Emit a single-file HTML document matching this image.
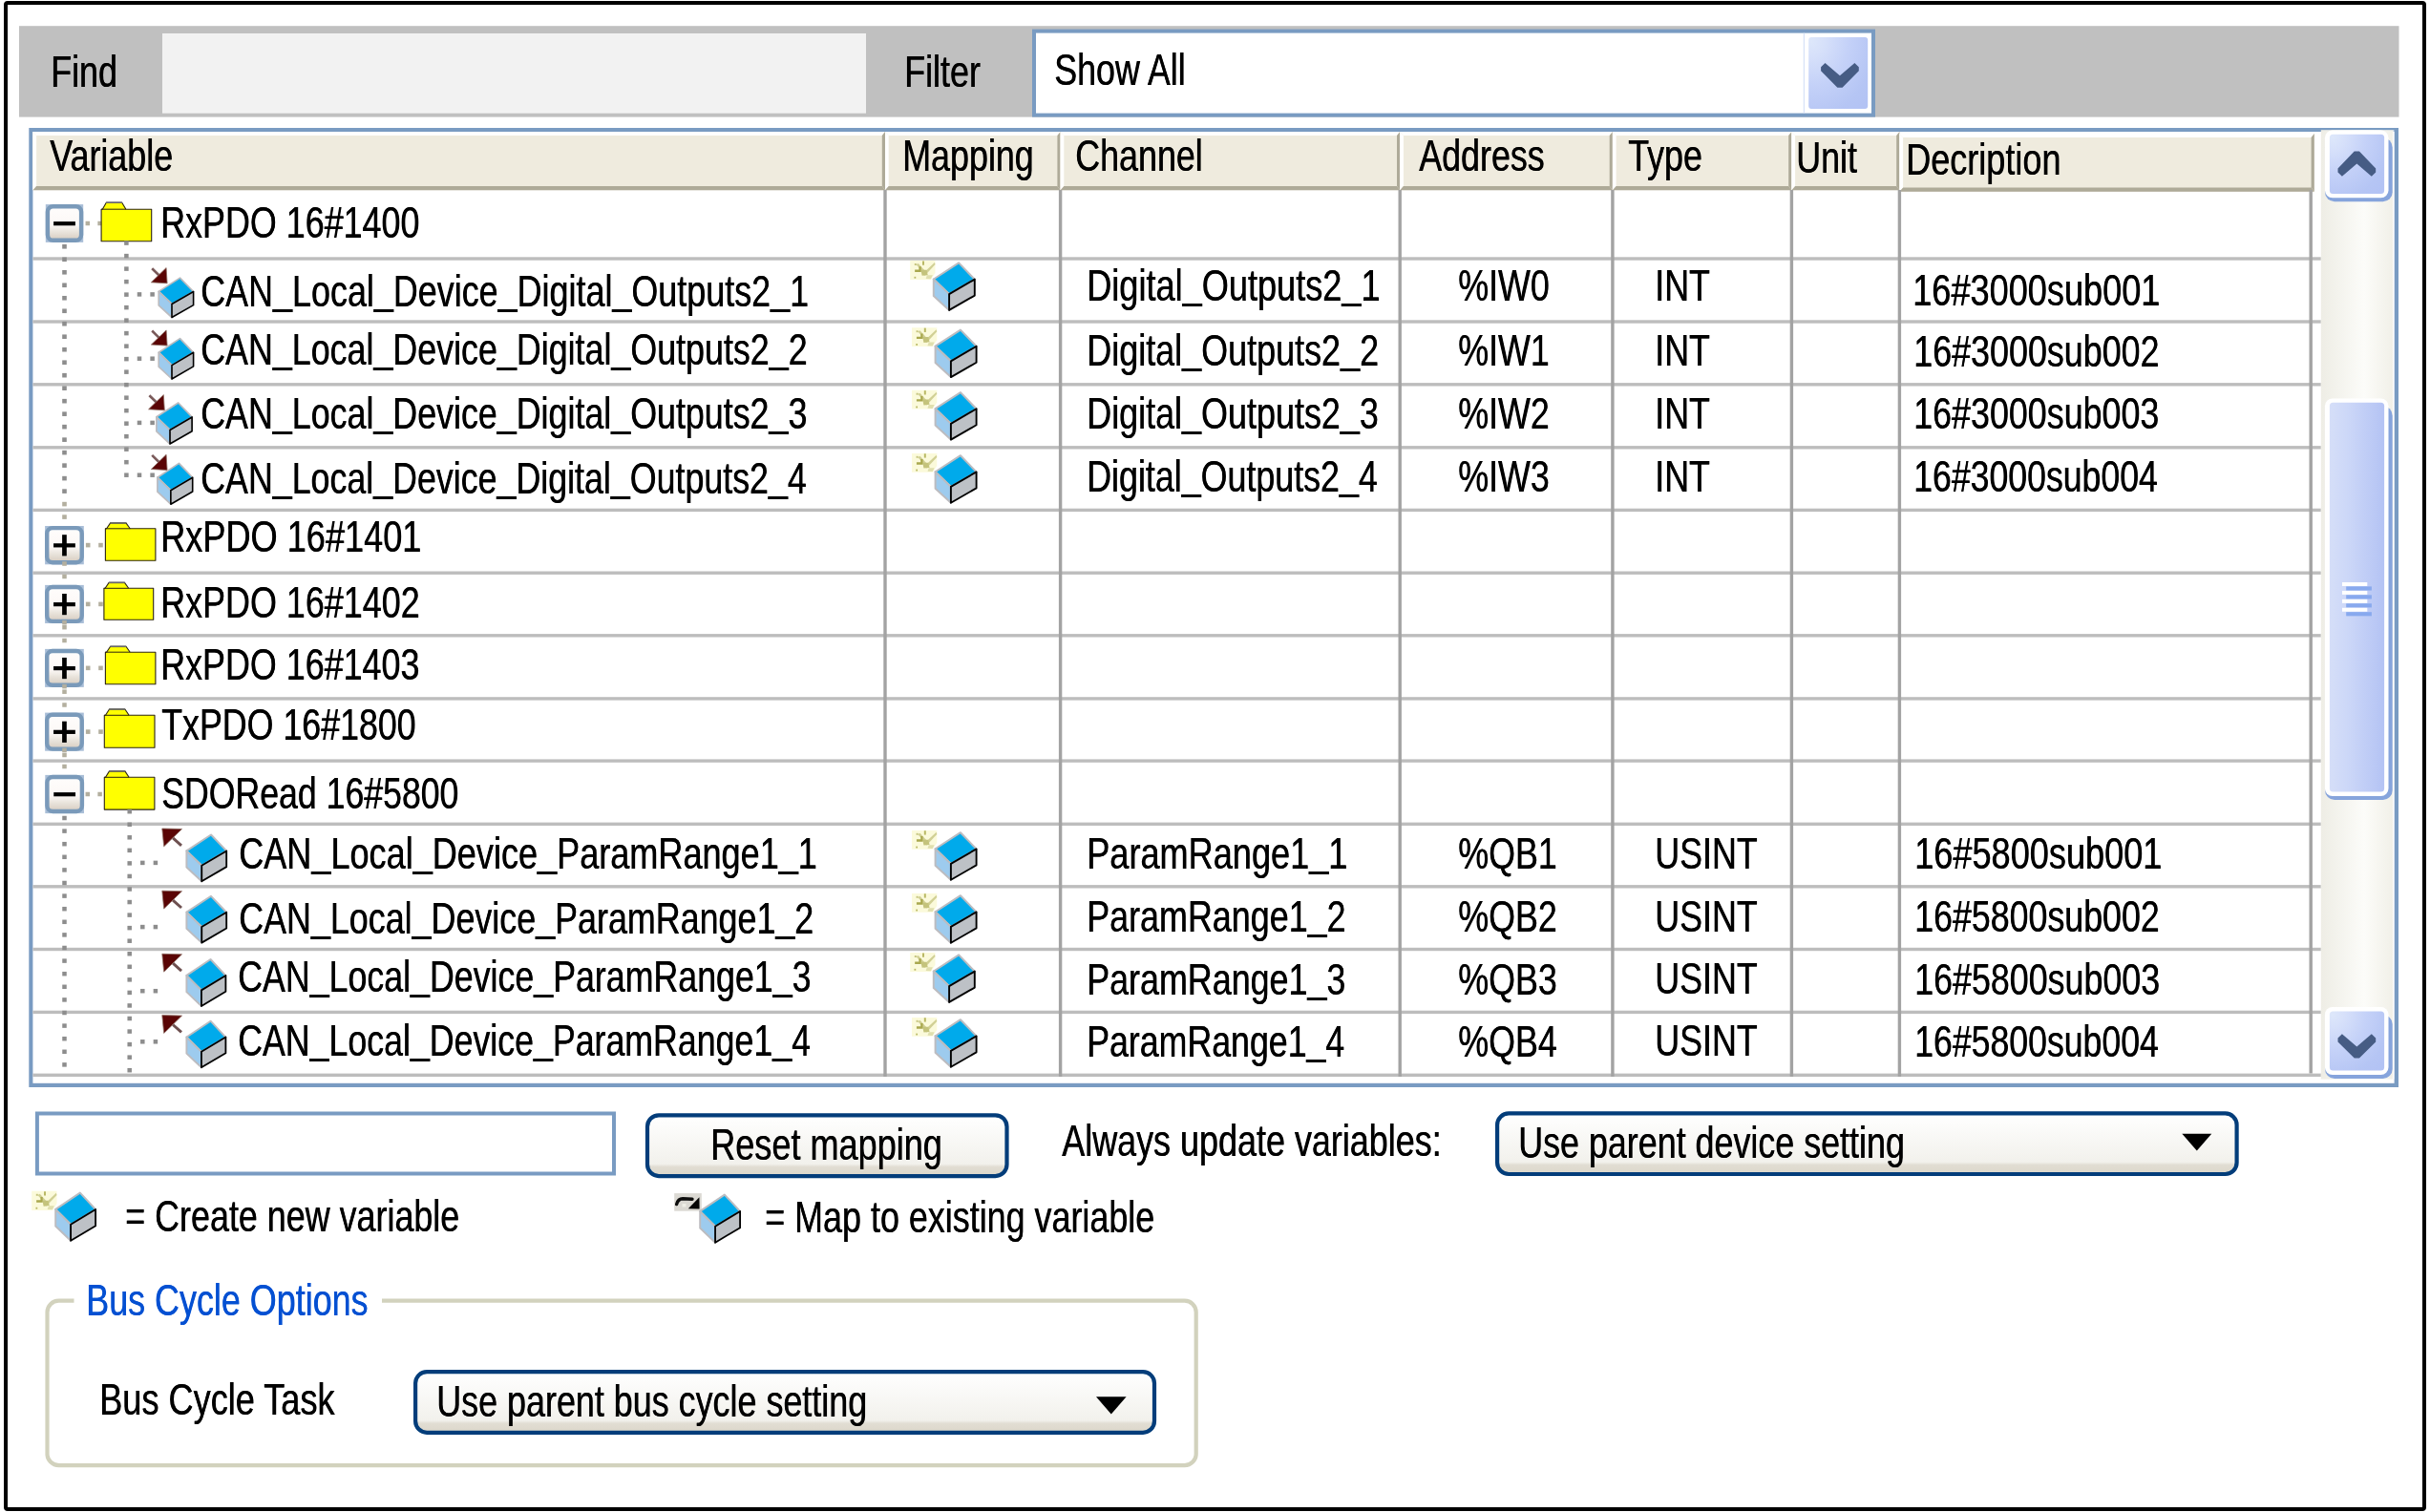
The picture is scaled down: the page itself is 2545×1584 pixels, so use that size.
<!DOCTYPE html>
<html><head><meta charset="utf-8"><title>I/O Mapping</title>
<style>
html,body{margin:0;padding:0;background:#fff;}
body{width:2545px;height:1584px;position:relative;overflow:hidden;font-family:"Liberation Sans",sans-serif;}
svg{position:absolute;left:0;top:0;}
#tx{position:absolute;left:0;top:0;width:2545px;height:1584px;will-change:transform;}
.t{position:absolute;white-space:nowrap;line-height:1;transform-origin:0 0;display:block;text-shadow:0.55px 0 0 currentColor;margin-left:-0.2px;}
.t i{font-style:normal;position:relative;top:-2.7px;}
</style></head><body>
<svg width="2545" height="1584" viewBox="0 0 2545 1584">
<rect x="6" y="3" width="2533" height="1578" fill="#fff" stroke="#000" stroke-width="4" rx="2"/>
<rect x="20.00" y="27.20" width="2492.50" height="95.40" fill="#c0c0c0" />
<rect x="170.00" y="35.00" width="737.00" height="83.70" fill="#f2f2f2" />
<rect x="1081.00" y="30.60" width="883.00" height="92.00" fill="#799bc2" />
<rect x="1085.00" y="34.60" width="875.00" height="84.00" fill="#fff" />
<defs>
<radialGradient id="gb" cx="0.05" cy="0.05" r="1.25"><stop offset="0" stop-color="#dde7fa"/><stop offset="0.18" stop-color="#d6e0fa"/><stop offset="0.5" stop-color="#c4d1f8"/><stop offset="0.85" stop-color="#b5c5f4"/><stop offset="1" stop-color="#b3c3f4"/></radialGradient>
<linearGradient id="gth" x1="0" y1="0" x2="1" y2="0"><stop offset="0" stop-color="#d5def8"/><stop offset="0.3" stop-color="#cdd8f8"/><stop offset="1" stop-color="#b4c3f4"/></linearGradient>
<linearGradient id="gtr" x1="0" y1="0" x2="1" y2="0"><stop offset="0" stop-color="#eeede5"/><stop offset="0.6" stop-color="#fcfcf9"/><stop offset="1" stop-color="#f1f0e8"/></linearGradient>
<linearGradient id="gbtn" x1="0" y1="0" x2="0" y2="1"><stop offset="0" stop-color="#ffffff"/><stop offset="0.80" stop-color="#f2f1ec"/><stop offset="0.85" stop-color="#e1ddd3"/><stop offset="1" stop-color="#dcd7ca"/></linearGradient>
<linearGradient id="gpm" x1="0" y1="0" x2="0" y2="1"><stop offset="0" stop-color="#fffdfc"/><stop offset="0.55" stop-color="#fcf8f6"/><stop offset="0.75" stop-color="#e9e4dc"/><stop offset="1" stop-color="#d6cbbf"/></linearGradient>
</defs>
<rect x="1888.80" y="34.60" width="1.10" height="84.00" fill="#d3dff7" />
<rect x="1894.2" y="39" width="62" height="75" rx="3" fill="url(#gb)"/>
<polygon points="1907.10,70.20 1911.50,66.00 1926.95,79.30 1942.40,66.00 1946.80,70.20 1946.80,74.20 1929.55,91.70 1924.35,91.70 1907.10,74.20" fill="#465c84"  />
<rect x="30.30" y="134.00" width="2481.70" height="1005.00" fill="#799bc2" />
<rect x="34.40" y="138.00" width="2473.20" height="996.80" fill="#fff" />
<polygon points="34.40,138.00 927.00,138.00 927.00,199.20 34.40,199.20" fill="#efebde"  />
<polygon points="34.40,138.00 927.00,138.00 923.80,142.00 38.10,142.00" fill="#ffffff"  />
<polygon points="34.40,138.00 38.10,142.00 38.10,194.90 34.40,199.20" fill="#ffffff"  />
<polygon points="927.00,138.00 927.00,199.20 923.80,194.90 923.80,142.00" fill="#aeaa98"  />
<polygon points="34.40,199.20 38.10,194.90 923.80,194.90 927.00,199.20" fill="#aeaa98"  />
<polygon points="927.00,138.00 1110.60,138.00 1110.60,199.20 927.00,199.20" fill="#efebde"  />
<polygon points="927.00,138.00 1110.60,138.00 1107.40,142.00 930.70,142.00" fill="#ffffff"  />
<polygon points="927.00,138.00 930.70,142.00 930.70,194.90 927.00,199.20" fill="#ffffff"  />
<polygon points="1110.60,138.00 1110.60,199.20 1107.40,194.90 1107.40,142.00" fill="#aeaa98"  />
<polygon points="927.00,199.20 930.70,194.90 1107.40,194.90 1110.60,199.20" fill="#aeaa98"  />
<polygon points="1110.60,138.00 1466.20,138.00 1466.20,199.20 1110.60,199.20" fill="#efebde"  />
<polygon points="1110.60,138.00 1466.20,138.00 1463.00,142.00 1114.30,142.00" fill="#ffffff"  />
<polygon points="1110.60,138.00 1114.30,142.00 1114.30,194.90 1110.60,199.20" fill="#ffffff"  />
<polygon points="1466.20,138.00 1466.20,199.20 1463.00,194.90 1463.00,142.00" fill="#aeaa98"  />
<polygon points="1110.60,199.20 1114.30,194.90 1463.00,194.90 1466.20,199.20" fill="#aeaa98"  />
<polygon points="1466.20,138.00 1688.90,138.00 1688.90,199.20 1466.20,199.20" fill="#efebde"  />
<polygon points="1466.20,138.00 1688.90,138.00 1685.70,142.00 1469.90,142.00" fill="#ffffff"  />
<polygon points="1466.20,138.00 1469.90,142.00 1469.90,194.90 1466.20,199.20" fill="#ffffff"  />
<polygon points="1688.90,138.00 1688.90,199.20 1685.70,194.90 1685.70,142.00" fill="#aeaa98"  />
<polygon points="1466.20,199.20 1469.90,194.90 1685.70,194.90 1688.90,199.20" fill="#aeaa98"  />
<polygon points="1688.90,138.00 1876.40,138.00 1876.40,199.20 1688.90,199.20" fill="#efebde"  />
<polygon points="1688.90,138.00 1876.40,138.00 1873.20,142.00 1692.60,142.00" fill="#ffffff"  />
<polygon points="1688.90,138.00 1692.60,142.00 1692.60,194.90 1688.90,199.20" fill="#ffffff"  />
<polygon points="1876.40,138.00 1876.40,199.20 1873.20,194.90 1873.20,142.00" fill="#aeaa98"  />
<polygon points="1688.90,199.20 1692.60,194.90 1873.20,194.90 1876.40,199.20" fill="#aeaa98"  />
<polygon points="1876.40,138.00 1989.40,138.00 1989.40,199.20 1876.40,199.20" fill="#efebde"  />
<polygon points="1876.40,138.00 1989.40,138.00 1986.20,142.00 1880.10,142.00" fill="#ffffff"  />
<polygon points="1876.40,138.00 1880.10,142.00 1880.10,194.90 1876.40,199.20" fill="#ffffff"  />
<polygon points="1989.40,138.00 1989.40,199.20 1986.20,194.90 1986.20,142.00" fill="#aeaa98"  />
<polygon points="1876.40,199.20 1880.10,194.90 1986.20,194.90 1989.40,199.20" fill="#aeaa98"  />
<polygon points="1989.40,139.90 2423.80,139.90 2423.80,200.80 1989.40,200.80" fill="#efebde"  />
<polygon points="1989.40,139.90 2423.80,139.90 2420.60,143.90 1993.10,143.90" fill="#ffffff"  />
<polygon points="1989.40,139.90 1993.10,143.90 1993.10,196.50 1989.40,200.80" fill="#ffffff"  />
<polygon points="2423.80,139.90 2423.80,200.80 2420.60,196.50 2420.60,143.90" fill="#aeaa98"  />
<polygon points="1989.40,200.80 1993.10,196.50 2420.60,196.50 2423.80,200.80" fill="#aeaa98"  />
<rect x="34.40" y="269.30" width="2396.40" height="3.40" fill="#bdbdbd" />
<rect x="34.40" y="335.30" width="2396.40" height="3.40" fill="#bdbdbd" />
<rect x="34.40" y="401.10" width="2396.40" height="3.40" fill="#bdbdbd" />
<rect x="34.40" y="467.10" width="2396.40" height="3.40" fill="#bdbdbd" />
<rect x="34.40" y="532.70" width="2396.40" height="3.40" fill="#bdbdbd" />
<rect x="34.40" y="598.50" width="2396.40" height="3.40" fill="#bdbdbd" />
<rect x="34.40" y="664.10" width="2396.40" height="3.40" fill="#bdbdbd" />
<rect x="34.40" y="730.20" width="2396.40" height="3.40" fill="#bdbdbd" />
<rect x="34.40" y="795.40" width="2396.40" height="3.40" fill="#bdbdbd" />
<rect x="34.40" y="861.60" width="2396.40" height="3.40" fill="#bdbdbd" />
<rect x="34.40" y="927.10" width="2396.40" height="3.40" fill="#bdbdbd" />
<rect x="34.40" y="992.80" width="2396.40" height="3.40" fill="#bdbdbd" />
<rect x="34.40" y="1058.70" width="2396.40" height="3.40" fill="#bdbdbd" />
<rect x="34.40" y="1124.60" width="2396.40" height="3.40" fill="#bdbdbd" />
<rect x="925.30" y="199.00" width="3.40" height="929.00" fill="#a3a3a3" />
<rect x="1108.90" y="199.00" width="3.40" height="929.00" fill="#a3a3a3" />
<rect x="1464.50" y="199.00" width="3.40" height="929.00" fill="#a3a3a3" />
<rect x="1687.20" y="199.00" width="3.40" height="929.00" fill="#a3a3a3" />
<rect x="1874.70" y="199.00" width="3.40" height="929.00" fill="#a3a3a3" />
<rect x="1987.70" y="199.00" width="3.40" height="929.00" fill="#a3a3a3" />
<rect x="2418.50" y="199.00" width="3.40" height="925.50" fill="#a3a3a3" />
<rect x="2430.80" y="136.20" width="75.60" height="994.40" fill="url(#gtr)" />
<rect x="2506.40" y="136.20" width="0.90" height="994.40" fill="#fff" />
<rect x="2435.0" y="144.40" width="70.70" height="66.90" rx="10" fill="#86a4dc"/>
<rect x="2434.9" y="136.40" width="66.60" height="70.90" rx="8" fill="#fff"/>
<rect x="2439.9" y="140.80" width="57.20" height="62.10" rx="3.5" fill="url(#gb)"/>
<polygon points="2448.50,180.60 2452.90,184.80 2468.35,171.50 2483.80,184.80 2488.20,180.60 2488.20,176.60 2470.95,158.40 2465.75,158.40 2448.50,176.60" fill="#465c84"  />
<rect x="2435.0" y="425.40" width="70.70" height="412.60" rx="10" fill="#86a4dc"/>
<rect x="2434.9" y="417.40" width="66.60" height="416.60" rx="8" fill="#fff"/>
<rect x="2439.9" y="421.80" width="57.20" height="407.80" rx="3.5" fill="url(#gth)"/>
<rect x="2435.0" y="1063.00" width="70.70" height="67.00" rx="10" fill="#86a4dc"/>
<rect x="2434.9" y="1055.00" width="66.60" height="71.00" rx="8" fill="#fff"/>
<rect x="2439.9" y="1059.40" width="57.20" height="62.20" rx="3.5" fill="url(#gb)"/>
<polygon points="2448.50,1087.40 2452.90,1083.20 2468.35,1096.50 2483.80,1083.20 2488.20,1087.40 2488.20,1091.40 2470.95,1108.40 2465.75,1108.40 2448.50,1091.40" fill="#465c84"  />
<rect x="2457.20" y="614.40" width="26.70" height="4.15" fill="#88a9ee" />
<rect x="2453.00" y="610.00" width="26.30" height="3.95" fill="#fff" />
<rect x="2457.20" y="623.33" width="26.70" height="4.15" fill="#88a9ee" />
<rect x="2453.00" y="618.93" width="26.30" height="3.95" fill="#fff" />
<rect x="2457.20" y="632.26" width="26.70" height="4.15" fill="#88a9ee" />
<rect x="2453.00" y="627.86" width="26.30" height="3.95" fill="#fff" />
<rect x="2457.20" y="641.19" width="26.70" height="4.15" fill="#88a9ee" />
<rect x="2453.00" y="636.79" width="26.30" height="3.95" fill="#fff" />
<rect x="47.80" y="214.10" width="39.40" height="39.80" fill="#a9bed7" />
<rect x="49.90" y="216.20" width="35.20" height="35.60" rx="5.8" fill="url(#gpm)" stroke="#7a9aba" stroke-width="4.4"/>
<rect x="56.10" y="232.10" width="22.80" height="4.20" fill="#000" />
<rect x="89.55" y="231.75" width="4.50" height="4.50" fill="#b3af9f" />
<rect x="102.35" y="231.75" width="4.50" height="4.50" fill="#b3af9f" />
<polygon points="106.10,252.80 106.10,219.20 107.30,219.20 111.30,212.20 127.70,212.20 131.90,219.20 158.70,219.20 158.70,252.80" fill="#ffff00" stroke="#2c2410" stroke-width="1.1" stroke-linejoin="round" />
<line x1="106.10" y1="219.20" x2="131.90" y2="219.20" stroke="#2c2410" stroke-width="1.0" />
<line x1="111.10" y1="212.20" x2="127.90" y2="212.20" stroke="#6a6a6a" stroke-width="1.6" />
<rect x="65.20" y="256.00" width="4.60" height="4.60" fill="#8d8d8d" />
<rect x="65.20" y="269.49" width="4.60" height="4.60" fill="#8d8d8d" />
<rect x="65.20" y="282.98" width="4.60" height="4.60" fill="#8d8d8d" />
<rect x="65.20" y="296.47" width="4.60" height="4.60" fill="#8d8d8d" />
<rect x="65.20" y="309.96" width="4.60" height="4.60" fill="#8d8d8d" />
<rect x="65.20" y="323.45" width="4.60" height="4.60" fill="#8d8d8d" />
<rect x="65.20" y="336.94" width="4.60" height="4.60" fill="#8d8d8d" />
<rect x="65.20" y="350.43" width="4.60" height="4.60" fill="#8d8d8d" />
<rect x="65.20" y="363.92" width="4.60" height="4.60" fill="#8d8d8d" />
<rect x="65.20" y="377.41" width="4.60" height="4.60" fill="#8d8d8d" />
<rect x="65.20" y="390.90" width="4.60" height="4.60" fill="#8d8d8d" />
<rect x="65.20" y="404.39" width="4.60" height="4.60" fill="#8d8d8d" />
<rect x="65.20" y="417.88" width="4.60" height="4.60" fill="#8d8d8d" />
<rect x="65.20" y="431.37" width="4.60" height="4.60" fill="#8d8d8d" />
<rect x="65.20" y="444.86" width="4.60" height="4.60" fill="#8d8d8d" />
<rect x="65.20" y="458.35" width="4.60" height="4.60" fill="#8d8d8d" />
<rect x="65.20" y="471.84" width="4.60" height="4.60" fill="#8d8d8d" />
<rect x="65.20" y="485.33" width="4.60" height="4.60" fill="#8d8d8d" />
<rect x="65.20" y="498.82" width="4.60" height="4.60" fill="#8d8d8d" />
<rect x="65.20" y="512.31" width="4.60" height="4.60" fill="#8d8d8d" />
<rect x="65.20" y="525.80" width="4.60" height="4.60" fill="#b3af9f" />
<rect x="65.20" y="539.29" width="4.60" height="4.60" fill="#b3af9f" />
<rect x="130.15" y="252.35" width="4.50" height="4.50" fill="#8d8d8d" />
<rect x="130.15" y="265.86" width="4.50" height="4.50" fill="#8d8d8d" />
<rect x="130.15" y="279.36" width="4.50" height="4.50" fill="#8d8d8d" />
<rect x="130.15" y="292.87" width="4.50" height="4.50" fill="#8d8d8d" />
<rect x="130.15" y="306.37" width="4.50" height="4.50" fill="#8d8d8d" />
<rect x="130.15" y="319.88" width="4.50" height="4.50" fill="#8d8d8d" />
<rect x="130.15" y="333.38" width="4.50" height="4.50" fill="#8d8d8d" />
<rect x="130.15" y="346.88" width="4.50" height="4.50" fill="#8d8d8d" />
<rect x="130.15" y="360.39" width="4.50" height="4.50" fill="#8d8d8d" />
<rect x="130.15" y="373.89" width="4.50" height="4.50" fill="#8d8d8d" />
<rect x="130.15" y="387.40" width="4.50" height="4.50" fill="#8d8d8d" />
<rect x="130.15" y="400.90" width="4.50" height="4.50" fill="#8d8d8d" />
<rect x="130.15" y="414.41" width="4.50" height="4.50" fill="#8d8d8d" />
<rect x="130.15" y="427.91" width="4.50" height="4.50" fill="#8d8d8d" />
<rect x="130.15" y="441.42" width="4.50" height="4.50" fill="#8d8d8d" />
<rect x="130.15" y="454.92" width="4.50" height="4.50" fill="#8d8d8d" />
<rect x="130.15" y="468.43" width="4.50" height="4.50" fill="#8d8d8d" />
<rect x="130.15" y="481.93" width="4.50" height="4.50" fill="#8d8d8d" />
<rect x="130.15" y="495.44" width="4.50" height="4.50" fill="#8d8d8d" />
<rect x="143.75" y="306.15" width="4.50" height="4.50" fill="#8d8d8d" />
<rect x="157.35" y="306.15" width="4.50" height="4.50" fill="#8d8d8d" />
<line x1="159.20" y1="281.20" x2="166.90" y2="288.80" stroke="#7a5a5a" stroke-width="2.6" />
<polygon points="174.10,280.60 158.40,295.80 175.10,296.80" fill="#5a0505" stroke="#8a6a60" stroke-width="0.8" stroke-linejoin="round" />
<polygon points="188.51,291.10 202.60,305.47 180.00,318.47 166.20,305.38" fill="#00aaeb" stroke="#bcbcc0" stroke-width="1.6930232558139535" stroke-linejoin="round" />
<polygon points="166.20,305.38 180.00,318.47 180.00,332.50 166.20,319.96" fill="#9dcbee" stroke="#bcbcc0" stroke-width="1.6930232558139535" stroke-linejoin="round" />
<polygon points="180.00,318.47 202.60,305.47 202.60,319.67 180.00,332.50" fill="#bdc1c6" stroke="#000" stroke-width="1.6083720930232557" stroke-linejoin="round" />
<rect x="143.75" y="373.45" width="4.50" height="4.50" fill="#8d8d8d" />
<rect x="157.35" y="373.45" width="4.50" height="4.50" fill="#8d8d8d" />
<line x1="159.20" y1="346.50" x2="166.90" y2="354.10" stroke="#7a5a5a" stroke-width="2.6" />
<polygon points="174.10,345.90 158.40,361.10 175.10,362.10" fill="#5a0505" stroke="#8a6a60" stroke-width="0.8" stroke-linejoin="round" />
<polygon points="188.51,354.60 202.60,369.31 180.00,382.63 166.20,369.23" fill="#00aaeb" stroke="#bcbcc0" stroke-width="1.6930232558139535" stroke-linejoin="round" />
<polygon points="166.20,369.23 180.00,382.63 180.00,397.00 166.20,384.15" fill="#9dcbee" stroke="#bcbcc0" stroke-width="1.6930232558139535" stroke-linejoin="round" />
<polygon points="180.00,382.63 202.60,369.31 202.60,383.86 180.00,397.00" fill="#bdc1c6" stroke="#000" stroke-width="1.6083720930232557" stroke-linejoin="round" />
<rect x="143.75" y="440.65" width="4.50" height="4.50" fill="#8d8d8d" />
<rect x="157.35" y="440.65" width="4.50" height="4.50" fill="#8d8d8d" />
<line x1="156.40" y1="414.20" x2="164.10" y2="421.80" stroke="#7a5a5a" stroke-width="2.6" />
<polygon points="171.30,413.60 155.60,428.80 172.30,429.80" fill="#5a0505" stroke="#8a6a60" stroke-width="0.8" stroke-linejoin="round" />
<polygon points="186.70,422.00 201.10,436.92 178.00,450.42 163.90,436.83" fill="#00aaeb" stroke="#bcbcc0" stroke-width="1.730232558139535" stroke-linejoin="round" />
<polygon points="163.90,436.83 178.00,450.42 178.00,465.00 163.90,451.97" fill="#9dcbee" stroke="#bcbcc0" stroke-width="1.730232558139535" stroke-linejoin="round" />
<polygon points="178.00,450.42 201.10,436.92 201.10,451.67 178.00,465.00" fill="#bdc1c6" stroke="#000" stroke-width="1.6437209302325582" stroke-linejoin="round" />
<rect x="143.75" y="495.45" width="4.50" height="4.50" fill="#8d8d8d" />
<rect x="157.35" y="495.45" width="4.50" height="4.50" fill="#8d8d8d" />
<line x1="159.20" y1="476.90" x2="166.90" y2="484.50" stroke="#7a5a5a" stroke-width="2.6" />
<polygon points="174.10,476.30 158.40,491.50 175.10,492.50" fill="#5a0505" stroke="#8a6a60" stroke-width="0.8" stroke-linejoin="round" />
<polygon points="187.46,485.40 201.70,500.25 178.85,513.69 164.90,500.17" fill="#00aaeb" stroke="#bcbcc0" stroke-width="1.7116279069767442" stroke-linejoin="round" />
<polygon points="164.90,500.17 178.85,513.69 178.85,528.20 164.90,515.23" fill="#9dcbee" stroke="#bcbcc0" stroke-width="1.7116279069767442" stroke-linejoin="round" />
<polygon points="178.85,513.69 201.70,500.25 201.70,514.93 178.85,528.20" fill="#bdc1c6" stroke="#000" stroke-width="1.6260465116279068" stroke-linejoin="round" />
<rect x="47.10" y="551.00" width="40.70" height="40.30" fill="#a9bed7" />
<rect x="49.20" y="553.10" width="36.50" height="36.10" rx="5.8" fill="url(#gpm)" stroke="#7a9aba" stroke-width="4.4"/>
<rect x="56.05" y="569.25" width="22.80" height="4.20" fill="#000" />
<rect x="65.10" y="560.20" width="4.70" height="22.20" fill="#000" />
<rect x="89.90" y="568.80" width="4.60" height="4.60" fill="#b3af9f" />
<rect x="103.20" y="568.80" width="4.60" height="4.60" fill="#b3af9f" />
<rect x="65.20" y="588.20" width="4.60" height="4.60" fill="#b3af9f" />
<polygon points="110.40,587.30 110.40,553.80 111.60,553.80 115.60,547.90 132.00,547.90 136.20,553.80 162.90,553.80 162.90,587.30" fill="#ffff00" stroke="#2c2410" stroke-width="1.1" stroke-linejoin="round" />
<line x1="110.40" y1="553.80" x2="136.20" y2="553.80" stroke="#2c2410" stroke-width="1.0" />
<line x1="115.40" y1="547.90" x2="132.20" y2="547.90" stroke="#6a6a6a" stroke-width="1.6" />
<rect x="47.10" y="612.90" width="40.70" height="40.10" fill="#a9bed7" />
<rect x="49.20" y="615.00" width="36.50" height="35.90" rx="5.8" fill="url(#gpm)" stroke="#7a9aba" stroke-width="4.4"/>
<rect x="56.05" y="631.05" width="22.80" height="4.20" fill="#000" />
<rect x="65.10" y="622.00" width="4.70" height="22.20" fill="#000" />
<rect x="89.90" y="630.60" width="4.60" height="4.60" fill="#b3af9f" />
<rect x="103.20" y="630.60" width="4.60" height="4.60" fill="#b3af9f" />
<rect x="65.20" y="649.90" width="4.60" height="4.60" fill="#b3af9f" />
<polygon points="108.90,649.30 108.90,616.30 110.10,616.30 114.10,610.40 130.50,610.40 134.70,616.30 160.70,616.30 160.70,649.30" fill="#ffff00" stroke="#2c2410" stroke-width="1.1" stroke-linejoin="round" />
<line x1="108.90" y1="616.30" x2="134.70" y2="616.30" stroke="#2c2410" stroke-width="1.0" />
<line x1="113.90" y1="610.40" x2="130.70" y2="610.40" stroke="#6a6a6a" stroke-width="1.6" />
<rect x="47.10" y="679.90" width="40.70" height="40.00" fill="#a9bed7" />
<rect x="49.20" y="682.00" width="36.50" height="35.80" rx="5.8" fill="url(#gpm)" stroke="#7a9aba" stroke-width="4.4"/>
<rect x="56.05" y="698.00" width="22.80" height="4.20" fill="#000" />
<rect x="65.10" y="688.95" width="4.70" height="22.20" fill="#000" />
<rect x="89.90" y="697.55" width="4.60" height="4.60" fill="#b3af9f" />
<rect x="103.20" y="697.55" width="4.60" height="4.60" fill="#b3af9f" />
<rect x="65.20" y="716.80" width="4.60" height="4.60" fill="#b3af9f" />
<polygon points="110.40,716.80 110.40,683.20 111.60,683.20 115.60,677.30 132.00,677.30 136.20,683.20 162.90,683.20 162.90,716.80" fill="#ffff00" stroke="#2c2410" stroke-width="1.1" stroke-linejoin="round" />
<line x1="110.40" y1="683.20" x2="136.20" y2="683.20" stroke="#2c2410" stroke-width="1.0" />
<line x1="115.40" y1="677.30" x2="132.20" y2="677.30" stroke="#6a6a6a" stroke-width="1.6" />
<rect x="47.10" y="746.60" width="40.70" height="40.10" fill="#a9bed7" />
<rect x="49.20" y="748.70" width="36.50" height="35.90" rx="5.8" fill="url(#gpm)" stroke="#7a9aba" stroke-width="4.4"/>
<rect x="56.05" y="764.75" width="22.80" height="4.20" fill="#000" />
<rect x="65.10" y="755.70" width="4.70" height="22.20" fill="#000" />
<rect x="89.90" y="764.30" width="4.60" height="4.60" fill="#b3af9f" />
<rect x="103.20" y="764.30" width="4.60" height="4.60" fill="#b3af9f" />
<rect x="65.20" y="783.60" width="4.60" height="4.60" fill="#b3af9f" />
<polygon points="109.30,783.20 109.30,749.30 110.50,749.30 114.50,743.00 130.90,743.00 135.10,749.30 162.00,749.30 162.00,783.20" fill="#ffff00" stroke="#2c2410" stroke-width="1.1" stroke-linejoin="round" />
<line x1="109.30" y1="749.30" x2="135.10" y2="749.30" stroke="#2c2410" stroke-width="1.0" />
<line x1="114.30" y1="743.00" x2="131.10" y2="743.00" stroke="#6a6a6a" stroke-width="1.6" />
<rect x="65.25" y="601.75" width="4.50" height="4.50" fill="#b3af9f" />
<rect x="65.25" y="654.95" width="4.50" height="4.50" fill="#b3af9f" />
<rect x="65.25" y="668.75" width="4.50" height="4.50" fill="#b3af9f" />
<rect x="65.25" y="722.45" width="4.50" height="4.50" fill="#b3af9f" />
<rect x="65.25" y="736.25" width="4.50" height="4.50" fill="#b3af9f" />
<rect x="65.25" y="788.75" width="4.50" height="4.50" fill="#b3af9f" />
<rect x="65.25" y="800.75" width="4.50" height="4.50" fill="#b3af9f" />
<rect x="47.30" y="811.90" width="40.70" height="40.20" fill="#a9bed7" />
<rect x="49.40" y="814.00" width="36.50" height="36.00" rx="5.8" fill="url(#gpm)" stroke="#7a9aba" stroke-width="4.4"/>
<rect x="56.25" y="830.10" width="22.80" height="4.20" fill="#000" />
<rect x="89.55" y="829.75" width="4.50" height="4.50" fill="#b3af9f" />
<rect x="102.35" y="829.75" width="4.50" height="4.50" fill="#b3af9f" />
<polygon points="109.30,848.10 109.30,814.30 110.50,814.30 114.50,807.90 130.90,807.90 135.10,814.30 161.90,814.30 161.90,848.10" fill="#ffff00" stroke="#2c2410" stroke-width="1.1" stroke-linejoin="round" />
<line x1="109.30" y1="814.30" x2="135.10" y2="814.30" stroke="#2c2410" stroke-width="1.0" />
<line x1="114.30" y1="807.90" x2="131.10" y2="807.90" stroke="#6a6a6a" stroke-width="1.6" />
<rect x="65.25" y="854.75" width="4.50" height="4.50" fill="#8d8d8d" />
<rect x="65.25" y="868.35" width="4.50" height="4.50" fill="#8d8d8d" />
<rect x="65.25" y="881.95" width="4.50" height="4.50" fill="#8d8d8d" />
<rect x="65.25" y="895.55" width="4.50" height="4.50" fill="#8d8d8d" />
<rect x="65.25" y="909.15" width="4.50" height="4.50" fill="#8d8d8d" />
<rect x="65.25" y="922.75" width="4.50" height="4.50" fill="#8d8d8d" />
<rect x="65.25" y="936.35" width="4.50" height="4.50" fill="#8d8d8d" />
<rect x="65.25" y="949.95" width="4.50" height="4.50" fill="#8d8d8d" />
<rect x="65.25" y="963.55" width="4.50" height="4.50" fill="#8d8d8d" />
<rect x="65.25" y="977.15" width="4.50" height="4.50" fill="#8d8d8d" />
<rect x="65.25" y="990.75" width="4.50" height="4.50" fill="#8d8d8d" />
<rect x="65.25" y="1004.35" width="4.50" height="4.50" fill="#8d8d8d" />
<rect x="65.25" y="1017.95" width="4.50" height="4.50" fill="#8d8d8d" />
<rect x="65.25" y="1031.55" width="4.50" height="4.50" fill="#8d8d8d" />
<rect x="65.25" y="1045.15" width="4.50" height="4.50" fill="#8d8d8d" />
<rect x="65.25" y="1058.75" width="4.50" height="4.50" fill="#8d8d8d" />
<rect x="65.25" y="1072.35" width="4.50" height="4.50" fill="#8d8d8d" />
<rect x="65.25" y="1085.95" width="4.50" height="4.50" fill="#8d8d8d" />
<rect x="65.25" y="1099.55" width="4.50" height="4.50" fill="#8d8d8d" />
<rect x="65.25" y="1113.15" width="4.50" height="4.50" fill="#8d8d8d" />
<rect x="133.45" y="847.95" width="4.50" height="4.50" fill="#8d8d8d" />
<rect x="133.45" y="861.50" width="4.50" height="4.50" fill="#8d8d8d" />
<rect x="133.45" y="875.05" width="4.50" height="4.50" fill="#8d8d8d" />
<rect x="133.45" y="888.60" width="4.50" height="4.50" fill="#8d8d8d" />
<rect x="133.45" y="902.15" width="4.50" height="4.50" fill="#8d8d8d" />
<rect x="133.45" y="915.70" width="4.50" height="4.50" fill="#8d8d8d" />
<rect x="133.45" y="929.25" width="4.50" height="4.50" fill="#8d8d8d" />
<rect x="133.45" y="942.80" width="4.50" height="4.50" fill="#8d8d8d" />
<rect x="133.45" y="956.35" width="4.50" height="4.50" fill="#8d8d8d" />
<rect x="133.45" y="969.90" width="4.50" height="4.50" fill="#8d8d8d" />
<rect x="133.45" y="983.45" width="4.50" height="4.50" fill="#8d8d8d" />
<rect x="133.45" y="997.00" width="4.50" height="4.50" fill="#8d8d8d" />
<rect x="133.45" y="1010.55" width="4.50" height="4.50" fill="#8d8d8d" />
<rect x="133.45" y="1024.10" width="4.50" height="4.50" fill="#8d8d8d" />
<rect x="133.45" y="1037.65" width="4.50" height="4.50" fill="#8d8d8d" />
<rect x="133.45" y="1051.20" width="4.50" height="4.50" fill="#8d8d8d" />
<rect x="133.45" y="1064.75" width="4.50" height="4.50" fill="#8d8d8d" />
<rect x="133.45" y="1078.30" width="4.50" height="4.50" fill="#8d8d8d" />
<rect x="133.45" y="1091.85" width="4.50" height="4.50" fill="#8d8d8d" />
<rect x="133.45" y="1105.40" width="4.50" height="4.50" fill="#8d8d8d" />
<rect x="133.45" y="1118.95" width="4.50" height="4.50" fill="#8d8d8d" />
<rect x="147.05" y="901.65" width="4.50" height="4.50" fill="#8d8d8d" />
<rect x="160.65" y="901.65" width="4.50" height="4.50" fill="#8d8d8d" />
<line x1="181.10" y1="877.90" x2="190.00" y2="885.80" stroke="#6e5050" stroke-width="3.0" />
<polygon points="169.80,868.00 190.50,868.50 171.70,886.80" fill="#5a0505" stroke="#8a6a60" stroke-width="0.8" stroke-linejoin="round" />
<polygon points="221.02,874.50 237.20,891.43 211.24,906.76 195.40,891.34" fill="#00aaeb" stroke="#bcbcc0" stroke-width="1.9441860465116279" stroke-linejoin="round" />
<polygon points="195.40,891.34 211.24,906.76 211.24,923.30 195.40,908.51" fill="#9dcbee" stroke="#bcbcc0" stroke-width="1.9441860465116279" stroke-linejoin="round" />
<polygon points="211.24,906.76 237.20,891.43 237.20,908.17 211.24,923.30" fill="#bdc1c6" stroke="#000" stroke-width="1.8469767441860463" stroke-linejoin="round" />
<rect x="147.05" y="968.85" width="4.50" height="4.50" fill="#8d8d8d" />
<rect x="160.65" y="968.85" width="4.50" height="4.50" fill="#8d8d8d" />
<line x1="181.10" y1="943.10" x2="190.00" y2="951.00" stroke="#6e5050" stroke-width="3.0" />
<polygon points="169.80,933.20 190.50,933.70 171.70,952.00" fill="#5a0505" stroke="#8a6a60" stroke-width="0.8" stroke-linejoin="round" />
<polygon points="221.02,938.80 237.20,955.73 211.24,971.06 195.40,955.64" fill="#00aaeb" stroke="#bcbcc0" stroke-width="1.9441860465116279" stroke-linejoin="round" />
<polygon points="195.40,955.64 211.24,971.06 211.24,987.60 195.40,972.81" fill="#9dcbee" stroke="#bcbcc0" stroke-width="1.9441860465116279" stroke-linejoin="round" />
<polygon points="211.24,971.06 237.20,955.73 237.20,972.47 211.24,987.60" fill="#bdc1c6" stroke="#000" stroke-width="1.8469767441860463" stroke-linejoin="round" />
<rect x="147.05" y="1035.95" width="4.50" height="4.50" fill="#8d8d8d" />
<rect x="160.65" y="1035.95" width="4.50" height="4.50" fill="#8d8d8d" />
<line x1="181.10" y1="1009.20" x2="190.00" y2="1017.10" stroke="#6e5050" stroke-width="3.0" />
<polygon points="169.80,999.30 190.50,999.80 171.70,1018.10" fill="#5a0505" stroke="#8a6a60" stroke-width="0.8" stroke-linejoin="round" />
<polygon points="220.53,1005.00 236.40,1022.00 210.94,1037.39 195.40,1021.90" fill="#00aaeb" stroke="#bcbcc0" stroke-width="1.9069767441860466" stroke-linejoin="round" />
<polygon points="195.40,1021.90 210.94,1037.39 210.94,1054.00 195.40,1039.15" fill="#9dcbee" stroke="#bcbcc0" stroke-width="1.9069767441860466" stroke-linejoin="round" />
<polygon points="210.94,1037.39 236.40,1022.00 236.40,1038.81 210.94,1054.00" fill="#bdc1c6" stroke="#000" stroke-width="1.8116279069767443" stroke-linejoin="round" />
<rect x="147.05" y="1089.05" width="4.50" height="4.50" fill="#8d8d8d" />
<rect x="160.65" y="1089.05" width="4.50" height="4.50" fill="#8d8d8d" />
<line x1="181.10" y1="1073.50" x2="190.00" y2="1081.40" stroke="#6e5050" stroke-width="3.0" />
<polygon points="169.80,1063.60 190.50,1064.10 171.70,1082.40" fill="#5a0505" stroke="#8a6a60" stroke-width="0.8" stroke-linejoin="round" />
<polygon points="220.53,1069.70 236.40,1086.56 210.94,1101.82 195.40,1086.47" fill="#00aaeb" stroke="#bcbcc0" stroke-width="1.9069767441860466" stroke-linejoin="round" />
<polygon points="195.40,1086.47 210.94,1101.82 210.94,1118.30 195.40,1103.57" fill="#9dcbee" stroke="#bcbcc0" stroke-width="1.9069767441860466" stroke-linejoin="round" />
<polygon points="210.94,1101.82 236.40,1086.56 236.40,1103.23 210.94,1118.30" fill="#bdc1c6" stroke="#000" stroke-width="1.8116279069767443" stroke-linejoin="round" />
<polygon points="953.20,273.10 979.50,273.10 979.50,286.08 974.90,292.90 953.20,292.90" fill="#fbfadb"  />
<polygon points="978.84,275.05 979.50,277.12 968.65,288.68 966.02,287.06" fill="#d1d095"  />
<polygon points="959.45,277.12 961.75,276.02 970.43,285.43 968.32,287.19" fill="#d1d095"  />
<polygon points="964.38,282.84 970.43,282.84 971.74,288.16 965.69,288.81" fill="#c4c37c"  />
<polygon points="966.02,273.42 967.99,273.42 967.99,277.77 966.02,277.77" fill="#b9b864"  />
<polygon points="958.13,282.51 962.40,282.51 962.40,279.27 964.71,279.27 964.71,284.92 958.13,284.92" fill="#a9a84e"  />
<polygon points="957.80,276.02 959.77,276.02 959.77,277.97 957.80,277.97" fill="#c4c37c"  />
<polygon points="957.47,289.85 959.25,289.85 959.25,291.67 957.47,291.67" fill="#b9b864"  />
<polygon points="970.95,288.36 976.87,288.36 974.90,292.32 969.64,291.93" fill="#e0dfae"  />
<polygon points="1004.16,275.40 1020.80,292.58 994.10,308.12 977.80,292.48" fill="#00aaeb" stroke="#bcbcc0" stroke-width="2.0" stroke-linejoin="round" />
<polygon points="977.80,292.48 994.10,308.12 994.10,324.90 977.80,309.90" fill="#9dcbee" stroke="#bcbcc0" stroke-width="2.0" stroke-linejoin="round" />
<polygon points="994.10,308.12 1020.80,292.58 1020.80,309.56 994.10,324.90" fill="#bdc1c6" stroke="#000" stroke-width="1.9" stroke-linejoin="round" />
<polygon points="955.00,343.30 981.30,343.30 981.30,356.28 976.70,363.10 955.00,363.10" fill="#fbfadb"  />
<polygon points="980.64,345.25 981.30,347.32 970.45,358.88 967.82,357.26" fill="#d1d095"  />
<polygon points="961.25,347.32 963.55,346.22 972.23,355.63 970.12,357.39" fill="#d1d095"  />
<polygon points="966.18,353.04 972.23,353.04 973.54,358.36 967.49,359.01" fill="#c4c37c"  />
<polygon points="967.82,343.62 969.79,343.62 969.79,347.97 967.82,347.97" fill="#b9b864"  />
<polygon points="959.93,352.71 964.21,352.71 964.21,349.47 966.51,349.47 966.51,355.12 959.93,355.12" fill="#a9a84e"  />
<polygon points="959.60,346.22 961.58,346.22 961.58,348.17 959.60,348.17" fill="#c4c37c"  />
<polygon points="959.27,360.05 961.05,360.05 961.05,361.87 959.27,361.87" fill="#b9b864"  />
<polygon points="972.75,358.56 978.67,358.56 976.70,362.52 971.44,362.13" fill="#e0dfae"  />
<polygon points="1005.96,345.60 1022.60,362.78 995.90,378.32 979.60,362.68" fill="#00aaeb" stroke="#bcbcc0" stroke-width="2.0" stroke-linejoin="round" />
<polygon points="979.60,362.68 995.90,378.32 995.90,395.10 979.60,380.10" fill="#9dcbee" stroke="#bcbcc0" stroke-width="2.0" stroke-linejoin="round" />
<polygon points="995.90,378.32 1022.60,362.78 1022.60,379.75 995.90,395.10" fill="#bdc1c6" stroke="#000" stroke-width="1.9" stroke-linejoin="round" />
<polygon points="955.00,408.80 981.30,408.80 981.30,421.78 976.70,428.60 955.00,428.60" fill="#fbfadb"  />
<polygon points="980.64,410.75 981.30,412.82 970.45,424.38 967.82,422.76" fill="#d1d095"  />
<polygon points="961.25,412.82 963.55,411.72 972.23,421.13 970.12,422.89" fill="#d1d095"  />
<polygon points="966.18,418.54 972.23,418.54 973.54,423.86 967.49,424.51" fill="#c4c37c"  />
<polygon points="967.82,409.12 969.79,409.12 969.79,413.47 967.82,413.47" fill="#b9b864"  />
<polygon points="959.93,418.21 964.21,418.21 964.21,414.97 966.51,414.97 966.51,420.62 959.93,420.62" fill="#a9a84e"  />
<polygon points="959.60,411.72 961.58,411.72 961.58,413.67 959.60,413.67" fill="#c4c37c"  />
<polygon points="959.27,425.55 961.05,425.55 961.05,427.37 959.27,427.37" fill="#b9b864"  />
<polygon points="972.75,424.06 978.67,424.06 976.70,428.02 971.44,427.63" fill="#e0dfae"  />
<polygon points="1005.96,411.10 1022.60,428.28 995.90,443.82 979.60,428.18" fill="#00aaeb" stroke="#bcbcc0" stroke-width="2.0" stroke-linejoin="round" />
<polygon points="979.60,428.18 995.90,443.82 995.90,460.60 979.60,445.60" fill="#9dcbee" stroke="#bcbcc0" stroke-width="2.0" stroke-linejoin="round" />
<polygon points="995.90,443.82 1022.60,428.28 1022.60,445.25 995.90,460.60" fill="#bdc1c6" stroke="#000" stroke-width="1.9" stroke-linejoin="round" />
<polygon points="955.00,474.90 981.30,474.90 981.30,487.88 976.70,494.70 955.00,494.70" fill="#fbfadb"  />
<polygon points="980.64,476.85 981.30,478.92 970.45,490.48 967.82,488.86" fill="#d1d095"  />
<polygon points="961.25,478.92 963.55,477.82 972.23,487.23 970.12,488.99" fill="#d1d095"  />
<polygon points="966.18,484.64 972.23,484.64 973.54,489.96 967.49,490.61" fill="#c4c37c"  />
<polygon points="967.82,475.22 969.79,475.22 969.79,479.57 967.82,479.57" fill="#b9b864"  />
<polygon points="959.93,484.31 964.21,484.31 964.21,481.07 966.51,481.07 966.51,486.72 959.93,486.72" fill="#a9a84e"  />
<polygon points="959.60,477.82 961.58,477.82 961.58,479.77 959.60,479.77" fill="#c4c37c"  />
<polygon points="959.27,491.65 961.05,491.65 961.05,493.47 959.27,493.47" fill="#b9b864"  />
<polygon points="972.75,490.16 978.67,490.16 976.70,494.12 971.44,493.73" fill="#e0dfae"  />
<polygon points="1005.96,477.20 1022.60,494.38 995.90,509.92 979.60,494.28" fill="#00aaeb" stroke="#bcbcc0" stroke-width="2.0" stroke-linejoin="round" />
<polygon points="979.60,494.28 995.90,509.92 995.90,526.70 979.60,511.70" fill="#9dcbee" stroke="#bcbcc0" stroke-width="2.0" stroke-linejoin="round" />
<polygon points="995.90,509.92 1022.60,494.38 1022.60,511.36 995.90,526.70" fill="#bdc1c6" stroke="#000" stroke-width="1.9" stroke-linejoin="round" />
<polygon points="955.00,869.90 981.30,869.90 981.30,882.88 976.70,889.70 955.00,889.70" fill="#fbfadb"  />
<polygon points="980.64,871.85 981.30,873.92 970.45,885.48 967.82,883.86" fill="#d1d095"  />
<polygon points="961.25,873.92 963.55,872.82 972.23,882.23 970.12,883.99" fill="#d1d095"  />
<polygon points="966.18,879.64 972.23,879.64 973.54,884.96 967.49,885.61" fill="#c4c37c"  />
<polygon points="967.82,870.22 969.79,870.22 969.79,874.57 967.82,874.57" fill="#b9b864"  />
<polygon points="959.93,879.31 964.21,879.31 964.21,876.07 966.51,876.07 966.51,881.72 959.93,881.72" fill="#a9a84e"  />
<polygon points="959.60,872.82 961.58,872.82 961.58,874.77 959.60,874.77" fill="#c4c37c"  />
<polygon points="959.27,886.65 961.05,886.65 961.05,888.47 959.27,888.47" fill="#b9b864"  />
<polygon points="972.75,885.16 978.67,885.16 976.70,889.12 971.44,888.73" fill="#e0dfae"  />
<polygon points="1005.96,872.20 1022.60,889.38 995.90,904.92 979.60,889.28" fill="#00aaeb" stroke="#bcbcc0" stroke-width="2.0" stroke-linejoin="round" />
<polygon points="979.60,889.28 995.90,904.92 995.90,921.70 979.60,906.70" fill="#9dcbee" stroke="#bcbcc0" stroke-width="2.0" stroke-linejoin="round" />
<polygon points="995.90,904.92 1022.60,889.38 1022.60,906.36 995.90,921.70" fill="#bdc1c6" stroke="#000" stroke-width="1.9" stroke-linejoin="round" />
<polygon points="955.00,935.90 981.30,935.90 981.30,948.88 976.70,955.70 955.00,955.70" fill="#fbfadb"  />
<polygon points="980.64,937.85 981.30,939.92 970.45,951.48 967.82,949.86" fill="#d1d095"  />
<polygon points="961.25,939.92 963.55,938.82 972.23,948.23 970.12,949.99" fill="#d1d095"  />
<polygon points="966.18,945.64 972.23,945.64 973.54,950.96 967.49,951.61" fill="#c4c37c"  />
<polygon points="967.82,936.22 969.79,936.22 969.79,940.57 967.82,940.57" fill="#b9b864"  />
<polygon points="959.93,945.31 964.21,945.31 964.21,942.07 966.51,942.07 966.51,947.72 959.93,947.72" fill="#a9a84e"  />
<polygon points="959.60,938.82 961.58,938.82 961.58,940.77 959.60,940.77" fill="#c4c37c"  />
<polygon points="959.27,952.65 961.05,952.65 961.05,954.47 959.27,954.47" fill="#b9b864"  />
<polygon points="972.75,951.16 978.67,951.16 976.70,955.12 971.44,954.73" fill="#e0dfae"  />
<polygon points="1005.96,938.20 1022.60,955.38 995.90,970.92 979.60,955.28" fill="#00aaeb" stroke="#bcbcc0" stroke-width="2.0" stroke-linejoin="round" />
<polygon points="979.60,955.28 995.90,970.92 995.90,987.70 979.60,972.70" fill="#9dcbee" stroke="#bcbcc0" stroke-width="2.0" stroke-linejoin="round" />
<polygon points="995.90,970.92 1022.60,955.38 1022.60,972.36 995.90,987.70" fill="#bdc1c6" stroke="#000" stroke-width="1.9" stroke-linejoin="round" />
<polygon points="953.20,998.10 979.50,998.10 979.50,1011.08 974.90,1017.90 953.20,1017.90" fill="#fbfadb"  />
<polygon points="978.84,1000.05 979.50,1002.12 968.65,1013.68 966.02,1012.06" fill="#d1d095"  />
<polygon points="959.45,1002.12 961.75,1001.02 970.43,1010.43 968.32,1012.19" fill="#d1d095"  />
<polygon points="964.38,1007.84 970.43,1007.84 971.74,1013.16 965.69,1013.81" fill="#c4c37c"  />
<polygon points="966.02,998.42 967.99,998.42 967.99,1002.77 966.02,1002.77" fill="#b9b864"  />
<polygon points="958.13,1007.51 962.40,1007.51 962.40,1004.27 964.71,1004.27 964.71,1009.92 958.13,1009.92" fill="#a9a84e"  />
<polygon points="957.80,1001.02 959.77,1001.02 959.77,1002.97 957.80,1002.97" fill="#c4c37c"  />
<polygon points="957.47,1014.85 959.25,1014.85 959.25,1016.67 957.47,1016.67" fill="#b9b864"  />
<polygon points="970.95,1013.36 976.87,1013.36 974.90,1017.32 969.64,1016.93" fill="#e0dfae"  />
<polygon points="1004.16,1000.40 1020.80,1017.58 994.10,1033.12 977.80,1017.48" fill="#00aaeb" stroke="#bcbcc0" stroke-width="2.0" stroke-linejoin="round" />
<polygon points="977.80,1017.48 994.10,1033.12 994.10,1049.90 977.80,1034.90" fill="#9dcbee" stroke="#bcbcc0" stroke-width="2.0" stroke-linejoin="round" />
<polygon points="994.10,1033.12 1020.80,1017.58 1020.80,1034.56 994.10,1049.90" fill="#bdc1c6" stroke="#000" stroke-width="1.9" stroke-linejoin="round" />
<polygon points="955.00,1065.90 981.30,1065.90 981.30,1078.88 976.70,1085.70 955.00,1085.70" fill="#fbfadb"  />
<polygon points="980.64,1067.85 981.30,1069.92 970.45,1081.48 967.82,1079.86" fill="#d1d095"  />
<polygon points="961.25,1069.92 963.55,1068.82 972.23,1078.23 970.12,1079.99" fill="#d1d095"  />
<polygon points="966.18,1075.64 972.23,1075.64 973.54,1080.96 967.49,1081.61" fill="#c4c37c"  />
<polygon points="967.82,1066.22 969.79,1066.22 969.79,1070.57 967.82,1070.57" fill="#b9b864"  />
<polygon points="959.93,1075.31 964.21,1075.31 964.21,1072.07 966.51,1072.07 966.51,1077.72 959.93,1077.72" fill="#a9a84e"  />
<polygon points="959.60,1068.82 961.58,1068.82 961.58,1070.77 959.60,1070.77" fill="#c4c37c"  />
<polygon points="959.27,1082.65 961.05,1082.65 961.05,1084.47 959.27,1084.47" fill="#b9b864"  />
<polygon points="972.75,1081.16 978.67,1081.16 976.70,1085.12 971.44,1084.73" fill="#e0dfae"  />
<polygon points="1005.96,1068.20 1022.60,1085.38 995.90,1100.92 979.60,1085.28" fill="#00aaeb" stroke="#bcbcc0" stroke-width="2.0" stroke-linejoin="round" />
<polygon points="979.60,1085.28 995.90,1100.92 995.90,1117.70 979.60,1102.70" fill="#9dcbee" stroke="#bcbcc0" stroke-width="2.0" stroke-linejoin="round" />
<polygon points="995.90,1100.92 1022.60,1085.38 1022.60,1102.35 995.90,1117.70" fill="#bdc1c6" stroke="#000" stroke-width="1.9" stroke-linejoin="round" />
<rect x="36.90" y="1164.50" width="608.10" height="67.00" fill="#799bc2" />
<rect x="40.90" y="1168.50" width="600.10" height="59.00" fill="#fff" />
<rect x="678.00" y="1168.30" width="376.50" height="63.80" rx="12" fill="url(#gbtn)" stroke="#033d7a" stroke-width="4.2"/>
<rect x="1568.10" y="1166.40" width="774.50" height="63.60" rx="12" fill="url(#gbtn)" stroke="#033d7a" stroke-width="4.2"/>
<polygon points="2285.30,1187.70 2316.30,1187.70 2300.80,1205.40" fill="#000"  />
<polygon points="33.20,1247.80 59.50,1247.80 59.50,1260.98 54.90,1267.90 33.20,1267.90" fill="#fbfadb"  />
<polygon points="58.84,1249.78 59.50,1251.89 48.65,1263.62 46.02,1261.97" fill="#d1d095"  />
<polygon points="39.45,1251.89 41.75,1250.77 50.43,1260.32 48.32,1262.10" fill="#d1d095"  />
<polygon points="44.38,1257.69 50.43,1257.69 51.74,1263.09 45.69,1263.75" fill="#c4c37c"  />
<polygon points="46.02,1248.13 47.99,1248.13 47.99,1252.54 46.02,1252.54" fill="#b9b864"  />
<polygon points="38.13,1257.36 42.41,1257.36 42.41,1254.06 44.71,1254.06 44.71,1259.79 38.13,1259.79" fill="#a9a84e"  />
<polygon points="37.80,1250.77 39.78,1250.77 39.78,1252.74 37.80,1252.74" fill="#c4c37c"  />
<polygon points="37.47,1264.80 39.25,1264.80 39.25,1266.65 37.47,1266.65" fill="#b9b864"  />
<polygon points="50.95,1263.29 56.87,1263.29 54.90,1267.31 49.64,1266.91" fill="#e0dfae"  />
<polygon points="83.88,1249.60 100.10,1266.98 74.08,1282.72 58.20,1266.88" fill="#00aaeb" stroke="#bcbcc0" stroke-width="1.9488372093023256" stroke-linejoin="round" />
<polygon points="58.20,1266.88 74.08,1282.72 74.08,1299.70 58.20,1284.52" fill="#9dcbee" stroke="#bcbcc0" stroke-width="1.9488372093023256" stroke-linejoin="round" />
<polygon points="74.08,1282.72 100.10,1266.98 100.10,1284.17 74.08,1299.70" fill="#bdc1c6" stroke="#000" stroke-width="1.8513953488372092" stroke-linejoin="round" />
<rect x="706.20" y="1250.10" width="28.60" height="18.60" fill="#dbd9d3" />
<path d="M 708.6 1261.6 Q 710.2 1255.9 715.0 1255.8 L 725.0 1256.2" fill="none" stroke="#0c0c0c" stroke-width="3.4" stroke-linecap="round"/>
<polygon points="732.40,1254.20 732.60,1266.40 720.80,1266.20" fill="#050505"  />
<rect x="714.50" y="1261.00" width="4.00" height="3.50" fill="#eeeee6" />
<polygon points="758.88,1251.60 775.10,1268.98 749.08,1284.72 733.20,1268.88" fill="#00aaeb" stroke="#bcbcc0" stroke-width="1.9488372093023256" stroke-linejoin="round" />
<polygon points="733.20,1268.88 749.08,1284.72 749.08,1301.70 733.20,1286.52" fill="#9dcbee" stroke="#bcbcc0" stroke-width="1.9488372093023256" stroke-linejoin="round" />
<polygon points="749.08,1284.72 775.10,1268.98 775.10,1286.17 749.08,1301.70" fill="#bdc1c6" stroke="#000" stroke-width="1.8513953488372092" stroke-linejoin="round" />
<path d="M 77.5 1362.7 H 61.5 A 12 12 0 0 0 49.5 1374.7 V 1523 A 12 12 0 0 0 61.5 1535.1 H 1240.7 A 12 12 0 0 0 1252.7 1523 V 1374.7 A 12 12 0 0 0 1240.7 1362.7 H 400" fill="none" stroke="#d2d2bd" stroke-width="4.2"/>
<rect x="435.10" y="1437.10" width="773.90" height="63.70" rx="12" fill="url(#gbtn)" stroke="#033d7a" stroke-width="4.2"/>
<polygon points="1148.00,1463.30 1179.60,1463.30 1163.80,1481.40" fill="#000"  />
</svg>
<div id="tx">
<span class="t" style="left:52.86px;top:52.62px;font-size:45.80px;color:#000;transform:scaleX(0.7830)">Find</span>
<span class="t" style="left:947.66px;top:52.62px;font-size:45.80px;color:#000;transform:scaleX(0.7830)">Filter</span>
<span class="t" style="left:1104.37px;top:50.62px;font-size:45.80px;color:#000;transform:scaleX(0.7830)">Show All</span>
<span class="t" style="left:167.96px;top:210.62px;font-size:45.80px;color:#000;transform:scaleX(0.7834)">RxPDO 16#1400</span>
<span class="t" style="left:210.28px;top:282.62px;font-size:45.80px;color:#000;transform:scaleX(0.7841)">CAN<i>_</i>Local<i>_</i>Device<i>_</i>Digital<i>_</i>Outputs2<i>_</i>1</span>
<span class="t" style="left:210.28px;top:343.62px;font-size:45.80px;color:#000;transform:scaleX(0.7823)">CAN<i>_</i>Local<i>_</i>Device<i>_</i>Digital<i>_</i>Outputs2<i>_</i>2</span>
<span class="t" style="left:210.28px;top:410.62px;font-size:45.80px;color:#000;transform:scaleX(0.7820)">CAN<i>_</i>Local<i>_</i>Device<i>_</i>Digital<i>_</i>Outputs2<i>_</i>3</span>
<span class="t" style="left:210.28px;top:478.62px;font-size:45.80px;color:#000;transform:scaleX(0.7813)">CAN<i>_</i>Local<i>_</i>Device<i>_</i>Digital<i>_</i>Outputs2<i>_</i>4</span>
<span class="t" style="left:168.14px;top:539.62px;font-size:45.80px;color:#000;transform:scaleX(0.7890)">RxPDO 16#1401</span>
<span class="t" style="left:168.15px;top:608.62px;font-size:45.80px;color:#000;transform:scaleX(0.7840)">RxPDO 16#1402</span>
<span class="t" style="left:168.16px;top:673.62px;font-size:45.80px;color:#000;transform:scaleX(0.7833)">RxPDO 16#1403</span>
<span class="t" style="left:168.80px;top:736.62px;font-size:45.80px;color:#000;transform:scaleX(0.7812)">TxPDO 16#1800</span>
<span class="t" style="left:168.98px;top:808.62px;font-size:45.80px;color:#000;transform:scaleX(0.7785)">SDORead 16#5800</span>
<span class="t" style="left:250.17px;top:871.62px;font-size:45.80px;color:#000;transform:scaleX(0.7877)">CAN<i>_</i>Local<i>_</i>Device<i>_</i>ParamRange1<i>_</i>1</span>
<span class="t" style="left:250.18px;top:939.62px;font-size:45.80px;color:#000;transform:scaleX(0.7830)">CAN<i>_</i>Local<i>_</i>Device<i>_</i>ParamRange1<i>_</i>2</span>
<span class="t" style="left:249.28px;top:1000.62px;font-size:45.80px;color:#000;transform:scaleX(0.7807)">CAN<i>_</i>Local<i>_</i>Device<i>_</i>ParamRange1<i>_</i>3</span>
<span class="t" style="left:249.29px;top:1067.62px;font-size:45.80px;color:#000;transform:scaleX(0.7800)">CAN<i>_</i>Local<i>_</i>Device<i>_</i>ParamRange1<i>_</i>4</span>
<span class="t" style="left:51.84px;top:140.62px;font-size:45.80px;color:#000;transform:scaleX(0.7830)">Variable</span>
<span class="t" style="left:944.76px;top:140.62px;font-size:45.80px;color:#000;transform:scaleX(0.7830)">Mapping</span>
<span class="t" style="left:1126.38px;top:140.62px;font-size:45.80px;color:#000;transform:scaleX(0.7830)">Channel</span>
<span class="t" style="left:1486.03px;top:140.62px;font-size:45.80px;color:#000;transform:scaleX(0.7830)">Address</span>
<span class="t" style="left:1704.89px;top:140.62px;font-size:45.80px;color:#000;transform:scaleX(0.7830)">Type</span>
<span class="t" style="left:1881.13px;top:142.62px;font-size:45.80px;color:#000;transform:scaleX(0.7830)">Unit</span>
<span class="t" style="left:1996.04px;top:144.62px;font-size:45.80px;color:#000;transform:scaleX(0.7871)">Decription</span>
<span class="t" style="left:1137.84px;top:276.62px;font-size:45.80px;color:#000;transform:scaleX(0.7890)">Digital<i>_</i>Outputs2<i>_</i>1</span>
<span class="t" style="left:1137.85px;top:344.62px;font-size:45.80px;color:#000;transform:scaleX(0.7852)">Digital<i>_</i>Outputs2<i>_</i>2</span>
<span class="t" style="left:1137.85px;top:410.62px;font-size:45.80px;color:#000;transform:scaleX(0.7846)">Digital<i>_</i>Outputs2<i>_</i>3</span>
<span class="t" style="left:1137.86px;top:476.62px;font-size:45.80px;color:#000;transform:scaleX(0.7819)">Digital<i>_</i>Outputs2<i>_</i>4</span>
<span class="t" style="left:1526.92px;top:276.62px;font-size:45.80px;color:#000;transform:scaleX(0.7830)">%IW0</span>
<span class="t" style="left:1527.12px;top:344.62px;font-size:45.80px;color:#000;transform:scaleX(0.7830)">%IW1</span>
<span class="t" style="left:1527.12px;top:410.62px;font-size:45.80px;color:#000;transform:scaleX(0.7830)">%IW2</span>
<span class="t" style="left:1527.12px;top:476.62px;font-size:45.80px;color:#000;transform:scaleX(0.7830)">%IW3</span>
<span class="t" style="left:1733.39px;top:276.62px;font-size:45.80px;color:#000;transform:scaleX(0.7830)">INT</span>
<span class="t" style="left:1733.39px;top:344.62px;font-size:45.80px;color:#000;transform:scaleX(0.7830)">INT</span>
<span class="t" style="left:1733.39px;top:410.62px;font-size:45.80px;color:#000;transform:scaleX(0.7830)">INT</span>
<span class="t" style="left:1733.39px;top:476.62px;font-size:45.80px;color:#000;transform:scaleX(0.7830)">INT</span>
<span class="t" style="left:2003.12px;top:281.62px;font-size:45.80px;color:#000;transform:scaleX(0.7890)">16#3000sub001</span>
<span class="t" style="left:2004.45px;top:345.62px;font-size:45.80px;color:#000;transform:scaleX(0.7833)">16#3000sub002</span>
<span class="t" style="left:2004.45px;top:410.62px;font-size:45.80px;color:#000;transform:scaleX(0.7826)">16#3000sub003</span>
<span class="t" style="left:2004.47px;top:476.62px;font-size:45.80px;color:#000;transform:scaleX(0.7780)">16#3000sub004</span>
<span class="t" style="left:1138.44px;top:871.62px;font-size:45.80px;color:#000;transform:scaleX(0.7890)">ParamRange1<i>_</i>1</span>
<span class="t" style="left:1138.46px;top:937.62px;font-size:45.80px;color:#000;transform:scaleX(0.7836)">ParamRange1<i>_</i>2</span>
<span class="t" style="left:1138.46px;top:1003.62px;font-size:45.80px;color:#000;transform:scaleX(0.7830)">ParamRange1<i>_</i>3</span>
<span class="t" style="left:1138.47px;top:1068.62px;font-size:45.80px;color:#000;transform:scaleX(0.7799)">ParamRange1<i>_</i>4</span>
<span class="t" style="left:1527.12px;top:871.62px;font-size:45.80px;color:#000;transform:scaleX(0.7830)">%QB1</span>
<span class="t" style="left:1527.12px;top:937.62px;font-size:45.80px;color:#000;transform:scaleX(0.7830)">%QB2</span>
<span class="t" style="left:1527.12px;top:1003.62px;font-size:45.80px;color:#000;transform:scaleX(0.7830)">%QB3</span>
<span class="t" style="left:1527.12px;top:1068.62px;font-size:45.80px;color:#000;transform:scaleX(0.7830)">%QB4</span>
<span class="t" style="left:1733.43px;top:871.62px;font-size:45.80px;color:#000;transform:scaleX(0.7830)">USINT</span>
<span class="t" style="left:1733.43px;top:937.62px;font-size:45.80px;color:#000;transform:scaleX(0.7830)">USINT</span>
<span class="t" style="left:1733.43px;top:1002.62px;font-size:45.80px;color:#000;transform:scaleX(0.7830)">USINT</span>
<span class="t" style="left:1733.43px;top:1067.62px;font-size:45.80px;color:#000;transform:scaleX(0.7830)">USINT</span>
<span class="t" style="left:2005.22px;top:871.62px;font-size:45.80px;color:#000;transform:scaleX(0.7889)">16#5800sub001</span>
<span class="t" style="left:2005.26px;top:937.62px;font-size:45.80px;color:#000;transform:scaleX(0.7808)">16#5800sub002</span>
<span class="t" style="left:2005.26px;top:1003.62px;font-size:45.80px;color:#000;transform:scaleX(0.7819)">16#5800sub003</span>
<span class="t" style="left:2005.27px;top:1068.62px;font-size:45.80px;color:#000;transform:scaleX(0.7780)">16#5800sub004</span>
<span class="t" style="left:744.64px;top:1176.62px;font-size:45.80px;color:#000;transform:scaleX(0.7878)">Reset mapping</span>
<span class="t" style="left:1112.13px;top:1172.62px;font-size:45.80px;color:#000;transform:scaleX(0.7847)">Always update variables:</span>
<span class="t" style="left:1590.33px;top:1174.62px;font-size:45.80px;color:#000;transform:scaleX(0.7830)">Use parent device setting</span>
<span class="t" style="left:131.15px;top:1251.62px;font-size:45.80px;color:#000;transform:scaleX(0.7835)">= Create new variable</span>
<span class="t" style="left:801.55px;top:1252.62px;font-size:45.80px;color:#000;transform:scaleX(0.7838)">= Map to existing variable</span>
<span class="t" style="left:90.35px;top:1339.62px;font-size:45.80px;color:#0450d2;transform:scaleX(0.7840)">Bus Cycle Options</span>
<span class="t" style="left:104.04px;top:1443.62px;font-size:45.80px;color:#000;transform:scaleX(0.7890)">Bus Cycle Task</span>
<span class="t" style="left:457.03px;top:1445.62px;font-size:45.80px;color:#000;transform:scaleX(0.7839)">Use parent bus cycle setting</span>
</div>
</body></html>
